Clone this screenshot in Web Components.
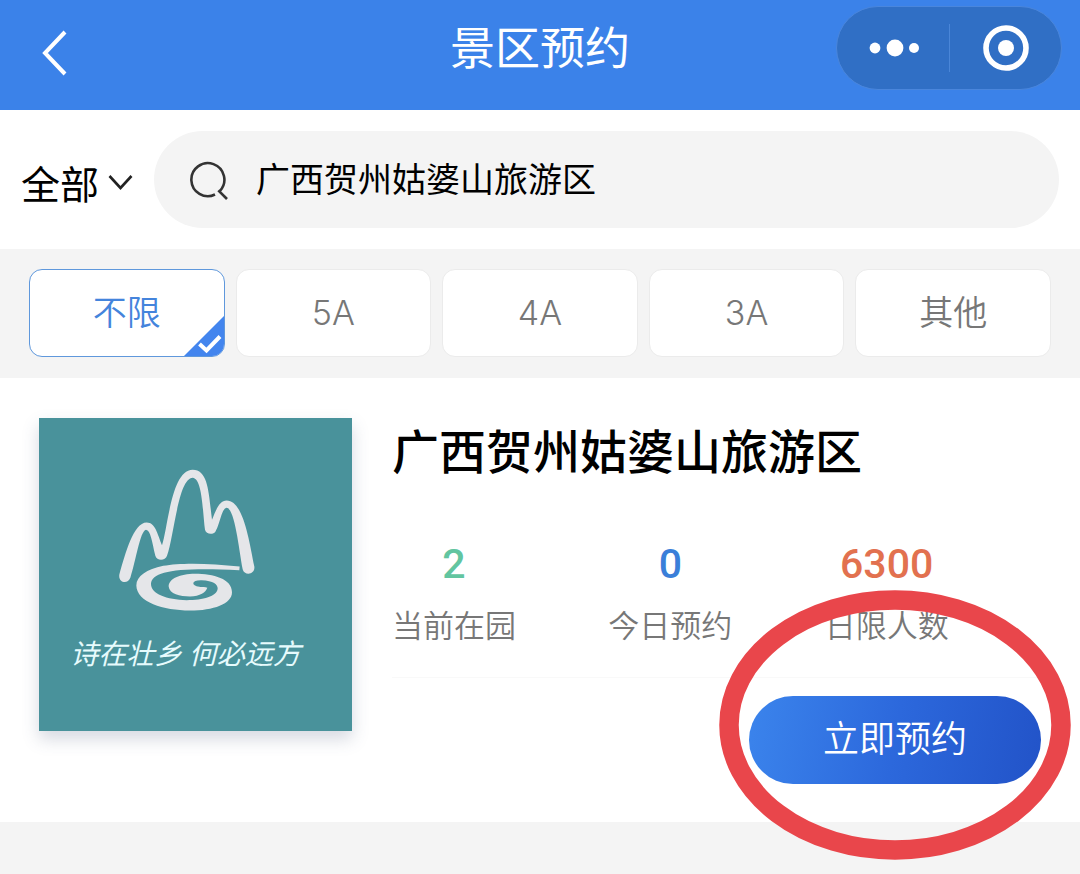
<!DOCTYPE html>
<html lang="zh-CN">
<head>
<meta charset="utf-8">
<meta name="viewport" content="width=device-width, initial-scale=1">
<title>景区预约</title>
<style>
  body {
    margin: 0;
    min-height: 100vh;
    background: #f4f4f4;
    color: #000;
    font-family: Roboto, "Noto Sans CJK SC", sans-serif;
  }
</style>
</head>
<body>
<app-header>景区预约</app-header>
<main>
  <search-bar value="广西贺州姑婆山旅游区"></search-bar>
  <level-filter options="不限,5A,4A,3A,其他"></level-filter>
  <scenic-card>
    <scenic-logo slot="picture">诗在壮乡 何必远方</scenic-logo>
    <span slot="name">广西贺州姑婆山旅游区</span>
    <stat-item slot="stats" value="2" style="--tone:#62c5a0">当前在园</stat-item>
    <stat-item slot="stats" value="0" style="--tone:#3a7fd9">今日预约</stat-item>
    <stat-item slot="stats" value="6300" style="--tone:#e2714f">日限人数</stat-item>
    <book-button slot="action">立即预约</book-button>
  </scenic-card>
</main>

<script>
  const define = (name, html, setup) => {
    const template = document.createElement('template');
    template.innerHTML = html;
    customElements.define(name, class extends HTMLElement {
      constructor() {
        super();
        this.attachShadow({ mode: 'open' }).append(template.content.cloneNode(true));
      }
      connectedCallback() {
        if (setup) setup(this, this.shadowRoot);
      }
    });
  };

  define('app-header', `
    <style>
      :host {
        display: grid;
        grid-template-columns: 1fr auto 1fr;
        align-items: center;
        padding: 6px 18px 20px;
        background: #3b82e9;
        color: #fff;
      }
      h1 { margin: 0; padding-top: 4px; font-size: 45px; line-height: 64px; font-weight: 400; }
      button { padding: 0; border: 0; background: none; color: inherit; display: flex; align-items: center; justify-content: center; }
      .back { width: 72px; height: 72px; justify-self: start; }
      .capsule {
        justify-self: end;
        display: flex;
        align-items: center;
        box-sizing: border-box;
        width: 226px;
        height: 84px;
        border: 1px solid #4a86dc;
        border-radius: 42px;
        background: #306fc5;
      }
      .capsule button { flex: 1; height: 100%; }
      i { width: 1px; height: 48px; background: #4a86d8; }
    </style>
    <button class="back" aria-label="返回">
      <svg width="30" height="60" viewBox="0 0 30 60" fill="none" stroke="#fff" stroke-width="4"><path d="M26 14 6 35 26 56"/></svg>
    </button>
    <h1><slot></slot></h1>
    <div class="capsule">
      <button aria-label="更多">
        <svg width="52" height="20" viewBox="0 0 52 20" fill="#fff"><circle cx="8" cy="10" r="5.4"/><circle cx="28" cy="10" r="8.4"/><circle cx="47" cy="10" r="5"/></svg>
      </button>
      <i></i>
      <button aria-label="关闭">
        <svg width="50" height="48" viewBox="0 0 50 48"><circle cx="26" cy="24" r="20" fill="none" stroke="#fff" stroke-width="5.6"/><circle cx="26" cy="24" r="8" fill="#fff"/></svg>
      </button>
    </div>
  `);

  define('search-bar', `
    <style>
      :host {
        display: flex;
        align-items: center;
        gap: 20px;
        padding: 21px;
        background: #fff;
      }
      .area { display: flex; align-items: center; gap: 8px; padding-top: 4px; }
      select {
        appearance: none;
        border: 0;
        padding: 0;
        background: none;
        color: #000;
        font: 400 39px/56px "Noto Sans CJK SC", sans-serif;
      }
      .box {
        flex: 1;
        display: flex;
        align-items: center;
        gap: 28px;
        height: 97px;
        padding: 0 36px;
        border-radius: 49px;
        background: #f4f4f4;
      }
      input {
        flex: 1;
        min-width: 0;
        border: 0;
        padding: 0 0 4px;
        outline: 0;
        background: none;
        color: #000;
        font: 400 34px/50px "Noto Sans CJK SC", sans-serif;
      }
      svg { flex: none; }
    </style>
    <label class="area">
      <select aria-label="地区"><option>全部</option></select>
      <svg width="26" height="18" viewBox="0 0 26 18" fill="none" stroke="#222" stroke-width="2.6"><path d="M1.500 3 12.500 15 23.500 3"/></svg>
    </label>
    <label class="box">
      <svg width="38" height="40" viewBox="0 0 38 40" fill="none" stroke="#333" stroke-width="2.600"><path d="M25 34.500A16.500 16.500 0 1 1 30 30.800"/><path d="M28.300 30.300 37 39"/></svg>
      <input type="text" aria-label="搜索景区">
    </label>
  `, (host, root) => {
    root.querySelector('input').value = host.getAttribute('value');
  });

  define('level-filter', `
    <style>
      :host { display: block; padding: 20px 29px 21px; background: #f4f4f4; }
      fieldset {
        display: grid;
        grid-template-columns: repeat(5, 1fr);
        gap: 11px;
        min-width: 0;
        margin: 0;
        padding: 0;
        border: 0;
      }
      label {
        position: relative;
        display: flex;
        align-items: center;
        justify-content: center;
        box-sizing: border-box;
        height: 88px;
        border: 1px solid #ebebeb;
        border-radius: 13px;
        overflow: hidden;
        background: #fff;
        color: #777;
        font: 350 34px/48px Inter, "Noto Sans CJK SC", sans-serif;
      }
      input { position: absolute; opacity: 0; margin: 0; }
      svg { position: absolute; right: 0; bottom: 0; display: none; }
      label:has(:checked) { border-color: #5f98dc; color: #4484dc; }
      label:has(:checked) svg { display: block; }
    </style>
    <fieldset aria-label="景区等级"></fieldset>
  `, (host, root) => {
    const set = root.querySelector('fieldset');
    set.innerHTML = host.getAttribute('options').split(',').map((text, i) => `
      <label>
        <input type="radio" name="level" ${i ? '' : 'checked'}>
        <span>${text}</span>
        <svg width="40" height="40" viewBox="0 0 40 40"><path d="M40 0V40H0Z" fill="#4385ee"/><path d="M15.500 28 22.500 34.500 36 20.500" fill="none" stroke="#fff" stroke-width="4"/></svg>
      </label>`).join('');
  });

  define('scenic-logo', `
    <style>
      :host {
        display: flex;
        flex-direction: column;
        aspect-ratio: 1;
        background: #49929b;
        color: #e6fbfd;
        box-shadow: 0 8px 16px rgba(70, 80, 120, .22);
      }
      svg { display: block; width: 100%; }
      p {
        margin: 0;
        padding-right: 20px;
        text-align: center;
        white-space: nowrap;
        font: italic 400 28px/40px "Noto Sans CJK SC", sans-serif;
      }
    </style>
    <svg viewBox="0 0 313 214" aria-hidden="true">
      <g transform="translate(61 32.500) scale(.33333)" fill="#e5e6e9">
        <path d="M58 372C76 310 100 216 140 216C166 216 172 250 186 284C204 230 214 58 278 58C326 58 326 130 336 208C348 178 358 150 380 150C428 150 446 260 463 348C466 374 432 376 428 356C416 290 404 174 380 172C364 174 360 222 347 242C340 254 318 252 315 238C308 190 308 84 278 82C234 84 222 260 201 316C196 332 170 332 166 316C156 274 152 240 138 238C120 242 108 330 91 382C84 402 54 398 58 372Z"/>
        <path d="M419 348C330 338 240 336 190 346C140 356 109 378 109 405C110 455 190 480 270 480C340 480 396 460 396 425C396 385 340 370 285 370C240 370 206 385 206 408C208 430 240 438 270 438C300 438 318 425 322 412C314 407 306 411 298 409C272 405 274 388 305 389C340 390 354 402 353 415C350 438 310 449 260 449C200 448 152 430 153 400C156 362 230 350 418 359Z"/>
      </g>
    </svg>
    <p><slot></slot></p>
  `);

  define('stat-item', `
    <style>
      :host { display: flex; flex-direction: column; gap: 23px; text-align: center; }
      strong { color: var(--tone); font: 500 41px/40px Roboto, sans-serif; }
      span { color: #777; font-size: 31px; line-height: 40px; font-weight: 350; }
    </style>
    <strong></strong>
    <span><slot></slot></span>
  `, (host, root) => {
    root.querySelector('strong').textContent = host.getAttribute('value');
  });

  define('book-button', `
    <style>
      :host { display: block; position: relative; }
      button {
        display: block;
        width: 292px;
        height: 88px;
        padding: 0 0 8px;
        border: 0;
        border-radius: 44px;
        background: linear-gradient(100deg, #3b84ec, #2c68dc 50%, #2253c8);
        color: #fff;
        font: 350 36px/52px "Noto Sans CJK SC", sans-serif;
      }
      /* Hand-drawn style highlight ring around the button */
      svg {
        position: absolute;
        left: -30px;
        top: -106px;
        width: 352px;
        height: 270px;
        pointer-events: none;
      }
    </style>
    <button><slot></slot></button>
    <svg viewBox="0 0 352 270" aria-hidden="true"><ellipse cx="176" cy="135" rx="166" ry="125" fill="none" stroke="#e9464b" stroke-width="19.500"/></svg>
  `);

  define('scenic-card', `
    <style>
      :host {
        display: grid;
        grid-template-columns: 313px 1fr;
        gap: 40px;
        align-items: start;
        padding: 40px 39px 38px;
        background: #fff;
      }
      .info { display: flex; flex-direction: column; }
      h2 { margin: 0 0 56px; font-size: 47px; line-height: 70px; font-weight: 500; }
      .stats {
        display: grid;
        grid-template-columns: repeat(3, 1fr);
        justify-items: start;
        padding-bottom: 30px;
        border-bottom: 1px solid #f9f9f9;
      }
      .action { display: flex; justify-content: flex-end; padding-top: 18px; }
    </style>
    <slot name="picture"></slot>
    <div class="info">
      <h2><slot name="name"></slot></h2>
      <div class="stats"><slot name="stats"></slot></div>
      <div class="action"><slot name="action"></slot></div>
    </div>
  `);
</script>
</body>
</html>
